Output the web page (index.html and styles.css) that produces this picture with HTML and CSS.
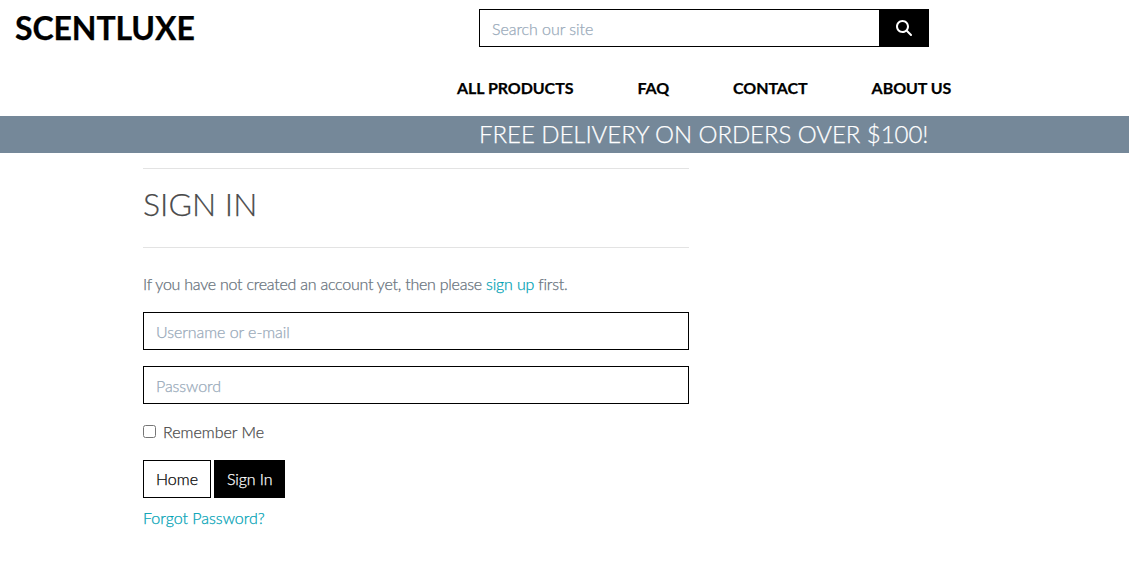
FILE: index.html
```
<!DOCTYPE html>
<html lang="en">
<head>
<meta charset="utf-8">
<title>ScentLuxe</title>
<link rel="stylesheet" href="styles.css">
</head>
<body>
<header class="header">
  <div class="top">
    <a class="logo">SCENTLUXE</a>
    <form class="search">
      <input class="search-input" type="text" placeholder="Search our site">
      <button class="search-button" type="button" aria-label="Search">
        <svg class="search-icon" viewBox="0 0 512 512"><path fill="currentColor" d="M416 208c0 45.900-14.900 88.300-40 122.700L502.600 457.400c12.500 12.500 12.500 32.800 0 45.300s-32.800 12.500-45.300 0L330.700 376c-34.400 25.200-76.800 40-122.700 40C93.100 416 0 322.900 0 208S93.100 0 208 0S416 93.100 416 208zM208 352a144 144 0 1 0 0-288 144 144 0 1 0 0 288z"/></svg>
      </button>
    </form>
  </div>
  <nav class="nav">
    <a>ALL PRODUCTS</a>
    <a>FAQ</a>
    <a>CONTACT</a>
    <a>ABOUT US</a>
  </nav>
</header>
<div class="banner">FREE DELIVERY ON ORDERS OVER $100!</div>
<main class="main">
  <h1 class="title">SIGN IN</h1>
  <p class="intro">If you have not created an account yet, then please <a class="link">sign up</a> first.</p>
  <form class="form">
    <input class="field" type="text" placeholder="Username or e-mail">
    <input class="field" type="password" placeholder="Password">
    <label class="remember"><input class="check" type="checkbox">Remember Me</label>
    <div class="actions">
      <a class="btn">Home</a>
      <button class="btn btn-dark" type="button">Sign In</button>
    </div>
    <a class="link forgot">Forgot Password?</a>
  </form>
</main>
</body>
</html>
```
FILE: styles.css
```
* { box-sizing: border-box; }
body {
  margin: 0;
  background: #fff;
  color: #4a4a4a;
  font: 300 16px/24px Lato, sans-serif;
  -webkit-text-stroke: 0.25px;
}
input, button { font: inherit; border-radius: 0; }
.header { height: 116px; }
.top {
  display: flex;
  align-items: flex-start;
  height: 76px;
  padding: 9px 0 0 15px;
}
.logo {
  width: 464px;
  color: #000;
  font-size: 32px;
  font-weight: 700;
  letter-spacing: -0.1px;
  line-height: 38px;
}
.search { display: flex; width: 450px; }
.search-input {
  flex: 1;
  min-width: 0;
  height: 38px;
  padding: 6px 12px;
  border: 1px solid #000;
  letter-spacing: -0.05px;
}
.search-button {
  display: grid;
  place-items: center;
  width: 49px;
  padding: 0 1px 0 0;
  border: 0;
  background: #000;
  color: #fff;
}
.search-icon { width: 16px; height: 16px; }
.nav {
  display: flex;
  gap: 64px;
  padding-left: 457px;
  color: #000;
  font-weight: 700;
  letter-spacing: -0.06px;
}
.banner {
  height: 37px;
  padding-left: 479px;
  background: #758899;
  color: #fff;
  font-size: 24px;
  letter-spacing: -0.05px;
  line-height: 36px;
  white-space: nowrap;
}
.main { width: 546px; margin: 15px 0 0 143px; }
.title {
  height: 80px;
  margin: 0 0 24px;
  padding-top: 16px;
  border: solid #e3e3e3;
  border-width: 1px 0;
  font-size: 32px;
  font-weight: 300;
  line-height: 38px;
}
.intro { margin: 0 0 16px; color: #66717b; letter-spacing: -0.24px; }
.intro .link { letter-spacing: -0.15px; }
.link { color: #00a2b5; }
.form { display: flex; flex-direction: column; }
.field {
  height: 38px;
  margin-bottom: 16px;
  padding: 6px 12px;
  border: 1px solid #000;
  letter-spacing: -0.05px;
}
::placeholder { color: #98a9b9; opacity: 1; }
.remember { display: flex; align-items: center; }
.check { width: 13px; height: 13px; margin: 0 7px 2px 0; }
.actions { display: flex; gap: 3px; margin: 16px 0 8px; }
.btn {
  height: 38px;
  padding: 6px 12px;
  border: 1px solid #000;
  color: #000;
}
.btn-dark { background: #000; color: #fff; letter-spacing: -0.1px; }
```
